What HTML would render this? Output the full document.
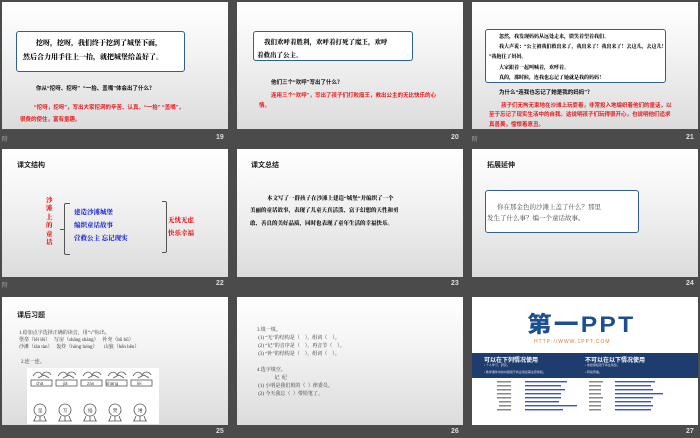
<!DOCTYPE html>
<html><head><meta charset="utf-8">
<style>
*{margin:0;padding:0;box-sizing:border-box}
body{width:700px;height:438px;background:#4b4b4b;position:relative;overflow:hidden;font-family:"Liberation Sans","Noto Sans CJK SC",sans-serif}
.s{position:absolute;width:226px;background:linear-gradient(#fff 0%,#f3f3f3 40%,#dcdcdc 100%);overflow:hidden}
.a{position:absolute;white-space:nowrap}
.sf{font-family:"Liberation Serif","Noto Serif CJK SC",serif;font-weight:900;color:#111}
.box{position:absolute;border:1.5px solid #2e5f96;border-radius:3px;background:#fff}
.red{color:#e8191c;font-weight:bold;font-size:5.5px}
.q{font-weight:bold;font-size:5.5px;color:#111}
.n{position:absolute;color:#ddd;font-size:7px;font-weight:bold}
.k{position:absolute;color:#aaa;font-size:6px}
</style></head><body>

<div class="s" style="left:2px;top:2px;height:127px">
  <div class="box" style="left:14px;top:29px;width:169px;height:41px"></div>
  <div class="a sf" style="left:34px;top:36px;font-size:7px">挖呀，挖呀，我们终于挖到了城堡下面，</div>
  <div class="a sf" style="left:21px;top:50px;font-size:7px">然后合力用手往上一抬，就把城堡给盖好了。</div>
  <div class="a q" style="left:34px;top:82px">你从“挖呀、挖呀” &nbsp;“一抬、盖嘴”体会出了什么？</div>
  <div class="a red" style="left:32px;top:101px">“挖呀，挖呀”，写出大家挖洞的辛苦、认真。“一抬” “盖嘴”，</div>
  <div class="a red" style="left:18px;top:113px">很费的使住，富有童趣。</div>
</div>
<div class="k" style="left:2px;top:134px">阶</div>
<div class="n" style="left:216px;top:134px">19</div>

<div class="s" style="left:237px;top:2px;height:127px">
  <div class="box" style="left:16px;top:29px;width:160px;height:30px"></div>
  <div class="a sf" style="left:27px;top:35px;font-size:6.5px">我们欢呼着胜利，欢呼着打死了魔王，欢呼</div>
  <div class="a sf" style="left:20px;top:48px;font-size:6.5px">着救出了公主。</div>
  <div class="a q" style="left:34px;top:76px">他们三个“欢呼”写出了什么？</div>
  <div class="a red" style="left:34px;top:89px">连用三个“欢呼”，写出了孩子们打败魔王，救出公主的无比快乐的心</div>
  <div class="a red" style="left:22px;top:99px">情。</div>
</div>
<div class="n" style="left:451px;top:134px">20</div>

<div class="s" style="left:472px;top:2px;height:127px">
  <div class="box" style="left:13px;top:27px;width:181px;height:54px"></div>
  <div class="a sf" style="left:27px;top:31px;font-size:5px">忽然，我发现妈妈从远处走来，微笑着望着我们。</div>
  <div class="a sf" style="left:27px;top:41px;font-size:5px">我大声说：“公主被我们救出来了，我出来了！我出来了！去这儿，去这儿！</div>
  <div class="a sf" style="left:17px;top:51px;font-size:5px">”我抱住了妈妈。</div>
  <div class="a sf" style="left:27px;top:62px;font-size:5px">大家跟着一起叫喊着，欢呼着。</div>
  <div class="a sf" style="left:27px;top:72px;font-size:5px">真的，那时候，连我也忘记了她就是我的妈妈！</div>
  <div class="a q" style="left:27px;top:86px">为什么“连我也忘记了她是我的妈妈”？</div>
  <div class="a red" style="left:29px;top:99px">孩子们无拘无束地在沙滩上玩耍着，非常投入地编织着他们的童话，以</div>
  <div class="a red" style="left:17px;top:108px">至于忘记了现实生活中的自我。这说明孩子们玩得很开心，也说明他们追求</div>
  <div class="a red" style="left:17px;top:118px">真善美，憧憬着意丑。</div>
</div>
<div class="k" style="left:472px;top:134px">阶</div>
<div class="n" style="left:686px;top:134px">21</div>

<div class="s" style="left:2px;top:149px;height:128px">
  <div class="a" style="left:15px;top:11px;font-size:7px;font-weight:bold;color:#222">课文结构</div>
  <div class="a sf" style="left:44px;top:48px;font-size:6.5px;color:#e8191c;line-height:8.4px;white-space:normal;width:8px">沙滩上的童话</div>
  <div style="position:absolute;left:62px;top:54px;width:6px;height:52px;border:1px solid #555;border-right:none;border-radius:2px 0 0 2px"></div>
  <div style="position:absolute;left:58px;top:80px;width:4px;border-top:1px solid #555"></div>
  <div class="a sf" style="left:72px;top:58px;font-size:6.5px;color:#1f2cd8">建造沙滩城堡</div>
  <div class="a sf" style="left:72px;top:71px;font-size:6.5px;color:#1f2cd8">编织童话故事</div>
  <div class="a sf" style="left:72px;top:84px;font-size:6.5px;color:#1f2cd8">营救公主 忘记现实</div>
  <div style="position:absolute;left:160px;top:52px;width:5px;height:52px;border:1px solid #555;border-left:none;border-radius:0 2px 2px 0"></div>
  <div class="a sf" style="left:166px;top:66px;font-size:6.5px;color:#e8191c">无忧无虑</div>
  <div class="a sf" style="left:166px;top:79px;font-size:6.5px;color:#e8191c">快乐幸福</div>
</div>
<div class="k" style="left:2px;top:280px">阶</div>
<div class="n" style="left:216px;top:280px">22</div>

<div class="s" style="left:237px;top:149px;height:128px">
  <div class="a" style="left:14px;top:11px;font-size:7px;font-weight:bold;color:#222">课文总结</div>
  <div class="a sf" style="left:30px;top:45px;font-size:5.5px">本文写了一群孩子在沙滩上建造“城堡”并编织了一个</div>
  <div class="a sf" style="left:13px;top:57px;font-size:5.5px">美丽的童话故事，表现了儿童天真活泼、富于幻想的天性和勇</div>
  <div class="a sf" style="left:13px;top:70px;font-size:5.5px">敢、善良的美好品质，同时也表现了童年生活的幸福快乐。</div>
</div>
<div class="n" style="left:451px;top:280px">23</div>

<div class="s" style="left:472px;top:149px;height:128px">
  <div class="a" style="left:15px;top:11px;font-size:7px;font-weight:bold;color:#222">拓展延伸</div>
  <div class="box" style="left:13px;top:41px;width:154px;height:43px"></div>
  <div class="a" style="left:25px;top:53px;font-size:6.5px;color:#444;font-family:'Liberation Serif','Noto Serif CJK SC',serif">你在那金色的沙滩上盖了什么？那里</div>
  <div class="a" style="left:15px;top:64px;font-size:6.5px;color:#444;font-family:'Liberation Serif','Noto Serif CJK SC',serif">发生了什么事？编一个童话故事。</div>
</div>
<div class="n" style="left:686px;top:280px">24</div>

<div class="s" style="left:2px;top:297px;height:128px">
  <div class="a" style="left:15px;top:13px;font-size:7px;font-weight:bold;color:#222">课后习题</div>
  <div class="a" style="left:17px;top:32px;font-size:5px;color:#333;font-family:'Liberation Serif','Noto Serif CJK SC',serif">1.给加点字选择正确的读音，用“√”标出。</div>
  <div class="a" style="left:17px;top:39px;font-size:5px;color:#333;font-family:'Liberation Serif','Noto Serif CJK SC',serif">堡垒（lěi lěi） &nbsp; 写房（shāng shàng） &nbsp; 补充（bǔ bǔ）</div>
  <div class="a" style="left:17px;top:46px;font-size:5px;color:#333;font-family:'Liberation Serif','Noto Serif CJK SC',serif">沙滩（tān tàn） &nbsp; 轰炸（hōng hóng） &nbsp; &nbsp; 山狼（hěn hěn）</div>
  <div class="a" style="left:19px;top:61px;font-size:5px;color:#333;font-family:'Liberation Serif','Noto Serif CJK SC',serif">2.连一连。</div>
  <div style="position:absolute;left:25px;top:71px;width:132px;height:56px;background:#fff"></div>
  <svg style="position:absolute;left:28px;top:73px" width="128" height="54" viewBox="0 0 128 54">
    <g fill="none" stroke="#555" stroke-width="0.8">
      <g id="b"><path d="M3 6 C6 1 10 1 12 5 C14 1 19 1 21 5 M8 8 L14 5 L19 8"/><rect x="1" y="10" width="21" height="6"/></g>
      <use href="#b" x="25"/><use href="#b" x="50"/><use href="#b" x="75"/><use href="#b" x="100"/>
      <g id="c"><circle cx="10" cy="40" r="6"/><path d="M6 46 L4 51 M10 46 L10 51 M14 46 L16 51 M3 51 H17"/></g>
      <use href="#c" x="25"/><use href="#c" x="50"/><use href="#c" x="75"/><use href="#c" x="100"/>
    </g>
    <g font-size="4.5" fill="#444" font-family="Liberation Sans">
      <text x="6" y="15">chā</text><text x="33" y="15">jiā</text><text x="57" y="15">zàn</text><text x="76" y="15">shāng</text><text x="107" y="15">lèi</text>
    </g>
    <g font-size="4.5" fill="#444" font-family="Noto Sans CJK SC">
      <text x="8" y="42">垒</text><text x="33" y="42">写</text><text x="58" y="42">插</text><text x="83" y="42">赞</text><text x="108" y="42">堆</text>
    </g>
  </svg>
</div>
<div class="n" style="left:216px;top:428px">25</div>

<div class="s" style="left:237px;top:297px;height:128px">
  <div style="position:absolute;left:20px;top:30px;font-size:5px;color:#333;line-height:8px;font-family:'Liberation Serif','Noto Serif CJK SC',serif;white-space:pre">3.填一填。
 (1) “无”的结构是（    ），组词（    ）。
 (2) “记”的音序是（    ），再音节（    ）。
 (3) “补”的结构是（    ），组词（    ）。

4.选字填空。
              记  纪
 (1) 小明是我们班的（  ）律委员。
 (2) 今天我忘（  ）带铅笔了。</div>
</div>
<div class="n" style="left:451px;top:428px">26</div>

<div class="s" style="left:472px;top:297px;height:128px;background:#fff">
  <div class="a" style="left:55px;top:17px;font-size:22px;font-weight:900;color:#1d4f8f;letter-spacing:2px;line-height:22px;transform:scaleX(1.12);transform-origin:left">第一PPT</div>
  <div class="a" style="left:62px;top:42px;font-size:5px;color:#e07a2a;letter-spacing:1px">HTTP://WWW.1PPT.COM</div>
  <div style="position:absolute;left:0;top:56px;width:226px;height:25px;background:#1e3c6e"></div>
  <div class="a" style="left:12px;top:58px;font-size:6px;font-weight:bold;color:#fff">可以在下列情况使用</div>
  <div class="a" style="left:12px;top:66px;font-size:3px;color:#dde">• 个人学习、研究。</div>
  <div class="a" style="left:12px;top:73px;font-size:3px;color:#dde">• 教学课件中的内容用于商业用途需注意授权。</div>
  <div class="a" style="left:113px;top:58px;font-size:6px;font-weight:bold;color:#fff">不可以在以下情况使用</div>
  <div class="a" style="left:113px;top:66px;font-size:3px;color:#dde">• 未经授权用于商业用途。</div>
  <div class="a" style="left:113px;top:73px;font-size:3px;color:#dde">• 转载传播。</div>
  <svg style="position:absolute;left:0;top:83px" width="226" height="40">
    <g fill="#888">
      <rect x="25" y="1" width="14" height="1.5"/><rect x="25" y="5" width="14" height="1.5"/><rect x="25" y="9" width="14" height="1.5"/><rect x="25" y="13" width="14" height="1.5"/><rect x="25" y="17" width="14" height="1.5"/><rect x="27" y="21" width="12" height="1.5"/><rect x="27" y="25" width="12" height="1.5"/><rect x="25" y="29" width="14" height="1.5"/>
      <rect x="117" y="1" width="14" height="1.5"/><rect x="117" y="5" width="12" height="1.5"/><rect x="117" y="9" width="12" height="1.5"/><rect x="117" y="13" width="12" height="1.5"/><rect x="117" y="17" width="14" height="1.5"/><rect x="117" y="21" width="12" height="1.5"/><rect x="117" y="25" width="12" height="1.5"/><rect x="117" y="29" width="12" height="1.5"/>
    </g>
    <g fill="#3a4fe0">
      <rect x="53" y="1" width="42" height="1.4"/><rect x="53" y="5" width="36" height="1.4"/><rect x="53" y="9" width="40" height="1.4"/><rect x="53" y="13" width="36" height="1.4"/><rect x="53" y="17" width="36" height="1.4"/><rect x="53" y="21" width="34" height="1.4"/><rect x="53" y="25" width="52" height="1.4"/><rect x="53" y="29" width="38" height="1.4"/>
      <rect x="143" y="1" width="40" height="1.4"/><rect x="143" y="5" width="36" height="1.4"/><rect x="143" y="9" width="38" height="1.4"/><rect x="143" y="13" width="48" height="1.4"/><rect x="143" y="17" width="38" height="1.4"/><rect x="143" y="21" width="36" height="1.4"/><rect x="143" y="25" width="38" height="1.4"/><rect x="143" y="29" width="36" height="1.4"/>
    </g>
  </svg>
</div>
<div class="n" style="left:686px;top:428px">27</div>
</body></html>
